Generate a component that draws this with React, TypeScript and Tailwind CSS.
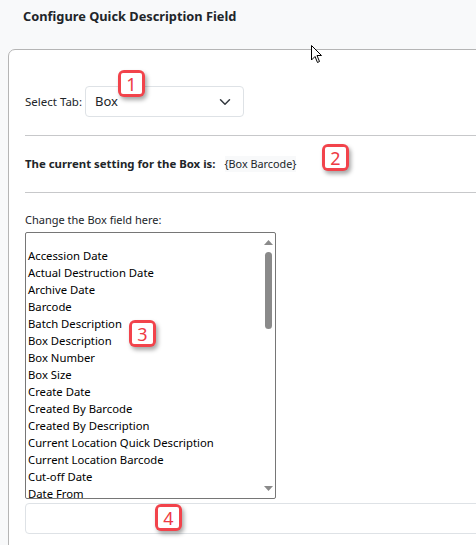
import React from 'react';

const fields = [
  'Accession Date',
  'Actual Destruction Date',
  'Archive Date',
  'Barcode',
  'Batch Description',
  'Box Description',
  'Box Number',
  'Box Size',
  'Create Date',
  'Created By Barcode',
  'Created By Description',
  'Current Location Quick Description',
  'Current Location Barcode',
  'Cut-off Date',
  'Date From',
];

function Badge({ n, className }: { n: number; className: string }) {
  return (
    <div
      className={
        'absolute w-[27px] h-[27px] rounded-[6px] bg-[#f2434b] p-[3px] shadow-[2px_3px_4px_rgba(0,0,0,0.35)] ' +
        className
      }
    >
      <div className="w-full h-full bg-white rounded-[2px] flex items-center justify-center text-[18px] leading-none text-[#ee3a44]">
        {n}
      </div>
    </div>
  );
}

export default function App() {
  return (
    <div className="relative w-[476px] h-[545px] overflow-hidden bg-[#f8f9fa] font-['Noto_Sans',sans-serif] text-[#212529]">
      {/* header */}
      <div className="h-[49px] pl-[23px] pt-[7px]">
        <h1 className="text-[12.8px] font-bold">Configure Quick Description Field</h1>
      </div>

      {/* card */}
      <div className="ml-[8px] w-[560px] h-[520px] bg-white border border-[#b5b5b5] rounded-tl-[7px] pl-[16px] pt-[36px]">
        <div className="flex items-center gap-[3px]">
          <span className="text-[11.5px]">Select Tab:</span>
          <div className="w-[159px] h-[31px] border border-[#dee2e6] rounded-[4px] flex items-center justify-between pl-[9px] pr-[12px]">
            <span className="text-[13px]">Box</span>
            <svg width="12" height="12" viewBox="0 0 16 16" fill="none" stroke="#343a40" strokeWidth="2" strokeLinecap="round" strokeLinejoin="round">
              <path d="M2 5l6 6 6-6" />
            </svg>
          </div>
        </div>

        <hr className="mt-[18px] border-t border-[#c7c8ca]" />

        <div className="h-[56px] flex items-center">
          <span className="font-bold text-[11.4px]">The current setting for the Box is:</span>
          <span className="ml-[9px] bg-[#f8f9fa] text-[10.8px]">{'{Box Barcode}'}</span>
        </div>

        <hr className="border-t border-[#c7c8ca]" />

        <div className="mt-[19px] text-[11px]">Change the Box field here:</div>

        {/* listbox */}
        <div className="mt-[3px] w-[251px] h-[267px] border border-[#767676] rounded-[2px] flex overflow-hidden">
          <div className="flex-1 pt-[14px] pl-[2px]">
            {fields.map((f) => (
              <div key={f} className="h-[17px] leading-[17px] text-[11.3px] text-black whitespace-nowrap">
                {f}
              </div>
            ))}
          </div>
          <div className="w-[13px] flex flex-col items-center pt-[7px] pb-[7px]">
            <svg width="9" height="5" viewBox="0 0 9 5">
              <path d="M0 5L4.5 0L9 5Z" fill="#8a8a8a" />
            </svg>
            <div className="mt-[7px] w-[7px] h-[77px] rounded-full bg-[#8a8a8a]" />
            <div className="flex-1" />
            <svg width="9" height="5" viewBox="0 0 9 5">
              <path d="M0 0L4.5 5L9 0Z" fill="#8a8a8a" />
            </svg>
          </div>
        </div>

        <div className="mt-[4px] w-[520px] h-[31px] border border-[#dee2e6] rounded-[4px]" />
      </div>

      {/* mouse cursor */}
      <svg className="absolute left-[311px] top-[45px]" width="12" height="19" viewBox="0 0 12 19">
        <path d="M0.5 0.5L0.5 15L4 11.5L6.5 17.5L8.5 16.5L6 10.5L10.5 10.5Z" fill="white" stroke="black" strokeWidth="1" strokeLinejoin="round" />
      </svg>

      <Badge n={1} className="left-[118px] top-[70px]" />
      <Badge n={2} className="left-[322px] top-[144px]" />
      <Badge n={3} className="left-[129px] top-[320px]" />
      <Badge n={4} className="left-[155px] top-[504px]" />
    </div>
  );
}
